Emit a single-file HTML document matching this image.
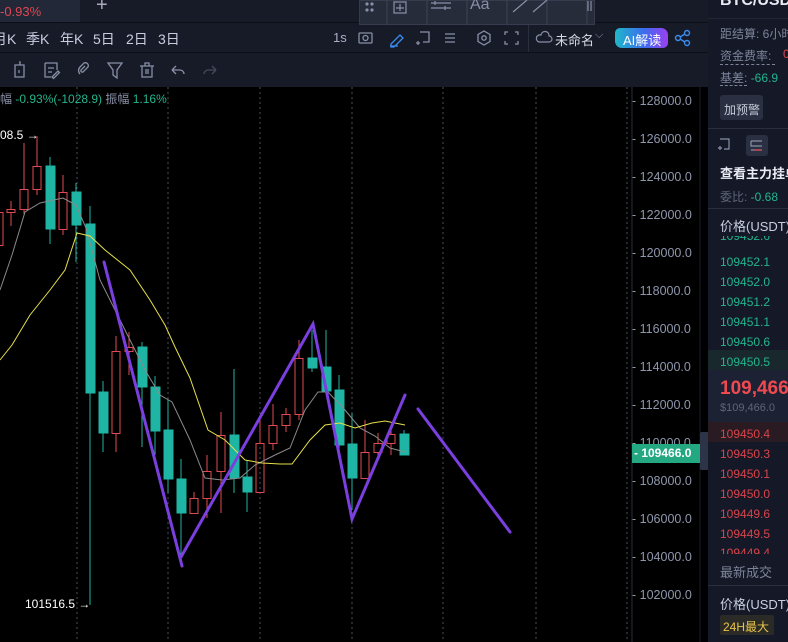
<!DOCTYPE html>
<html><head><meta charset="utf-8"><style>
*{margin:0;padding:0;box-sizing:border-box}
body{width:788px;height:642px;overflow:hidden;background:#000;font-family:"Liberation Sans","Noto Sans CJK SC",sans-serif;position:relative}
.abs{position:absolute}
.top{left:0;top:0;width:708px;height:87px;background:#171b28}
.t{position:absolute;white-space:nowrap}
.panel{left:708px;top:0;width:80px;height:642px;background:#151927}
.ax{color:#8f97ad;font-size:12.5px}
.tf{position:absolute;top:29px;color:#c8cde0;font-size:14px;white-space:nowrap}
</style></head><body>
<div class="abs top">
  <div class="abs" style="left:0;top:0;width:80px;height:22px;background:#222838"></div>
  <div class="t" style="left:0;top:4px;color:#e0474f;font-size:13px">-0.93%</div>
  <div class="t" style="left:96px;top:-6px;color:#aab;font-size:20px">+</div>
  <div class="abs" style="left:0;top:22px;width:708px;height:1px;background:#0c0e15"></div>
  <div class="tf" style="left:-7px">月K</div>
  <div class="tf" style="left:26px">季K</div>
  <div class="tf" style="left:60px">年K</div>
  <div class="tf" style="left:93px">5日</div>
  <div class="tf" style="left:126px">2日</div>
  <div class="tf" style="left:158px">3日</div>
  <div class="t" style="left:333px;top:30px;color:#a9b0c6;font-size:13px">1s</div>
  <svg class="abs" style="left:355px;top:28px" width="180" height="20" fill="none" stroke-width="1.3">
    <rect x="4" y="5" width="13" height="10" rx="1" stroke="#8890a6"/><circle cx="10.5" cy="10" r="2.5" stroke="#8890a6"/>
    <path d="M36 16l9-9 3 3-9 9h-3z M35 18h8" stroke="#3b8cf0"/>
    <path d="M65 4h9v10h-6 M63 13v4 M61 15h4" stroke="#8890a6"/>
    <path d="M90 6h10M90 10h10M90 14h10" stroke="#8890a6"/>
    <path d="M129 3l6 3.5v7l-6 3.5-6-3.5v-7z" stroke="#8890a6"/><circle cx="129" cy="10" r="2.2" stroke="#8890a6"/>
    <path d="M153 4h-3v3M160 4h3v3M153 16h-3v-3M160 16h3v-3" stroke="#8890a6"/>
  </svg>
  <div class="abs" style="left:528px;top:22px;width:1px;height:30px;background:#2a2f40"></div>
  <svg class="abs" style="left:535px;top:30px" width="18" height="14" fill="none"><path d="M4 12h10a3 3 0 0 0 0-6 4 4 0 0 0-8-1 3.5 3.5 0 0 0-2 7z" stroke="#8890a6" stroke-width="1.2"/></svg>
  <div class="t" style="left:555px;top:30px;color:#d5d9e6;font-size:13px">未命名</div>
  <div class="t" style="left:595px;top:29px;color:#8890a6;font-size:11px">⌵</div>
  <div class="abs" style="left:615px;top:28px;width:53px;height:20px;border-radius:5px 7px 5px 7px;background:linear-gradient(90deg,#1fb7c8,#3b6cf0 55%,#9b3ff0)"></div>
  <div class="t" style="left:623px;top:30px;color:#fff;font-size:13px">AI解读</div>
  <svg class="abs" style="left:674px;top:29px" width="18" height="18" fill="none" stroke="#3b8cf0" stroke-width="1.4"><circle cx="4" cy="9" r="2.5"/><circle cx="13" cy="4" r="2.5"/><circle cx="13" cy="14" r="2.5"/><path d="M6 8l5-3M6 10l5 3"/></svg>
  <div class="abs" style="left:0;top:52px;width:708px;height:1px;background:#0c0e15"></div>
  <svg class="abs" style="left:0;top:58px" width="220" height="24" fill="none" stroke="#8890a6" stroke-width="1.3">
    <path d="M15 7h9v12h-9z M19 4h1v3 M19 12v3"/>
    <path d="M45 5h12v7 M45 5v14h6 M48 10h6 M48 14h4 M52 19l6-6 1.5 1.5-6 6z"/>
    <path d="M80 16a5 5 0 0 1 0-7l4-4a3 3 0 0 1 4 4l-5 5a1.5 1.5 0 0 1-2-2l4-4"/>
    <path d="M108 5h14l-5 7v8l-4-3v-5z"/>
    <path d="M140 8h14 M145 8v-3h4v3 M142 8v11h10v-11 M146 11v5 M148 11v5"/>
    <path d="M172 12h8a4 4 0 0 1 4 4 M172 12l4-4 M172 12l4 4"/>
    <path d="M216 12h-8a4 4 0 0 0-4 4 M216 12l-4-4 M216 12l-4 4" stroke="#444a5c"/>
  </svg>
  <div class="abs" style="left:359px;top:0;width:236px;height:25px;background:#272c3b;border:1px solid #363c4e"></div>
  <svg class="abs" style="left:359px;top:0" width="236" height="25" fill="none" stroke="#8890a6" stroke-width="1.2">
    <path d="M28 0v25M68 0v25M108 0v25M148 0v25M188 0v25M228 0v25" stroke="#3a4052"/>
    <circle cx="8" cy="4" r="1" fill="#8890a6"/><circle cx="13" cy="4" r="1" fill="#8890a6"/><circle cx="8" cy="10" r="1" fill="#8890a6"/><circle cx="13" cy="10" r="1" fill="#8890a6"/>
    <path d="M35 2h12v11h-12z M41 4v7M37 8h8"/>
    <path d="M72 3h20M72 8h20M76 1v4M86 6v4"/>
    <path d="M154 12l14-12 M174 12l14-12"/>
    <path d="M229 1v10M232 1v10"/>
  </svg>
  <div class="t" style="left:470px;top:-4px;color:#8890a6;font-size:16px">Aa</div>
</div>

<svg class="abs" style="left:0;top:87px" width="708" height="555">
  <rect width="708" height="555" fill="#000"/>
  <g stroke="#4a4f5e" stroke-dasharray="2,3" stroke-width="1">
    <path d="M77 0v555M168 0v555M260 0v555M352 0v555M443 0v555M536 0v555M627 0v555"/>
  </g>
  <path d="M632 0v555" stroke="#2a2e3a"/>
  <path d="M700 0v555" stroke="#1a1d27"/>
</svg>
<div class="t" style="left:0;top:90px;color:#8890a6;font-size:12px">幅 <span style="color:#22b58e">-0.93%(-1028.9)</span> 振幅 <span style="color:#22b58e">1.16%</span></div>

<svg class="abs" style="left:0;top:0" width="708" height="642">
  <g stroke="#e04a50" fill="none" stroke-width="1">
    <path d="M-5 212.5h8v33h-8z"/>
    <path d="M11 201v8M11 212v14"/><rect x="7" y="209.5" width="8" height="3"/>
    <path d="M24 143v46M24 209v5"/><rect x="20" y="189.5" width="8" height="20"/>
    <path d="M37 136v30M37 189v6"/><rect x="33" y="166.5" width="8" height="23"/>
    <path d="M63 175v17M63 229v6"/><rect x="59" y="192.5" width="8" height="37"/>
    <path d="M116 336v15M116 433v19"/><rect x="112" y="351.5" width="8" height="82"/>
    <path d="M129 332v15M129 351v24"/><rect x="125" y="347.5" width="8" height="4"/>
    <path d="M194 492v6"/><rect x="190" y="498.5" width="8" height="15"/>
    <path d="M207 455v16M207 498v20"/><rect x="203" y="471.5" width="8" height="27"/>
    <path d="M221 412v23M221 471v42"/><rect x="217" y="435.5" width="8" height="36"/>
    <path d="M260 420v23"/><rect x="256" y="443.5" width="8" height="49"/>
    <path d="M273 404v21M273 443v7"/><rect x="269" y="425.5" width="8" height="18"/>
    <path d="M286 408v6M286 425v7"/><rect x="282" y="414.5" width="8" height="11"/>
    <path d="M299 340v18M299 414v6"/><rect x="295" y="358.5" width="8" height="56"/>
    <path d="M365 420v32"/><rect x="361" y="452.5" width="8" height="26"/>
    <path d="M378 433v10M378 452v3"/><rect x="374" y="443.5" width="8" height="9"/>
    <path d="M391 425v9M391 443v12"/><rect x="387" y="434.5" width="8" height="9"/>
  </g>
  <g stroke="#1fb5a5" fill="#1fb5a5" stroke-width="1">
    <path d="M50 157v72M50 229v15"/><rect x="46" y="166" width="9" height="63"/>
    <path d="M76 183v79"/><rect x="72" y="192" width="9" height="33"/>
    <path d="M90 206v399"/><rect x="86" y="224" width="9" height="169"/>
    <path d="M103 381v71"/><rect x="99" y="392" width="9" height="41"/>
    <path d="M142 342v105"/><rect x="138" y="347" width="9" height="40"/>
    <path d="M155 376v79"/><rect x="151" y="387" width="9" height="44"/>
    <path d="M168 400v93"/><rect x="164" y="430" width="9" height="49"/>
    <path d="M181 459v101"/><rect x="177" y="479" width="9" height="34"/>
    <path d="M234 369v124"/><rect x="230" y="435" width="9" height="43"/>
    <path d="M247 460v52"/><rect x="243" y="477" width="9" height="15"/>
    <path d="M312 330v42"/><rect x="308" y="358" width="9" height="10"/>
    <path d="M326 330v61"/><rect x="322" y="367" width="9" height="24"/>
    <path d="M339 375v75"/><rect x="335" y="390" width="9" height="55"/>
    <path d="M352 413v97"/><rect x="348" y="444" width="9" height="34"/>
    <path d="M404 430v25"/><rect x="400" y="434" width="9" height="21"/>
  </g>
  <path d="M0 290 L12 255 L25 212 L40 203 L63 198 L76 205 L86 228 L100 280 L120 320 L145 370 L160 395 L172 402 L190 440 L205 478 L222 480 L240 478 L255 465 L275 455 L290 448 L305 410 L318 392 L328 392 L345 410 L360 428 L375 436 L390 448 L405 452" fill="none" stroke="#8a8a8a" stroke-width="1"/>
  <path d="M0 360 L12 345 L30 315 L50 290 L65 270 L77 233 L90 236 L105 250 L130 270 L150 300 L165 325 L175 347 L190 378 L208 430 L225 440 L245 460 L262 463 L280 464 L292 464 L310 440 L325 425 L340 423 L355 428 L372 423 L385 421 L405 425" fill="none" stroke="#e6e04a" stroke-width="1"/>
  <g stroke="#7b3fe0" stroke-width="3" stroke-linecap="round" fill="none">
    <path d="M104 262 L182 566"/>
    <path d="M181 557 L313 324 L352 519 L405 395"/>
    <path d="M418 409 L510 532"/>
  </g>
</svg>
<div class="t" style="left:0;top:128px;color:#fff;font-size:12px">08.5 →</div>
<div class="t" style="left:25px;top:597px;color:#fff;font-size:12px">101516.5 →</div>

<div class="abs ax" style="left:632px;top:0;width:70px">
  <div class="t" style="top:94px">- 128000.0</div>
  <div class="t" style="top:132px">- 126000.0</div>
  <div class="t" style="top:170px">- 124000.0</div>
  <div class="t" style="top:208px">- 122000.0</div>
  <div class="t" style="top:246px">- 120000.0</div>
  <div class="t" style="top:284px">- 118000.0</div>
  <div class="t" style="top:322px">- 116000.0</div>
  <div class="t" style="top:360px">- 114000.0</div>
  <div class="t" style="top:398px">- 112000.0</div>
  <div class="t" style="top:436px">- 110000.0</div>
  <div class="t" style="top:474px">- 108000.0</div>
  <div class="t" style="top:512px">- 106000.0</div>
  <div class="t" style="top:550px">- 104000.0</div>
  <div class="t" style="top:588px">- 102000.0</div>
</div>
<div class="abs" style="left:632px;top:444px;width:68px;height:19px;background:#23a882"></div>
<div class="t" style="left:634px;top:446px;color:#fff;font-size:12px;font-weight:bold">- 109466.0</div>
<div class="abs" style="left:700px;top:432px;width:9px;height:38px;background:#2e3448;border-radius:2px"></div>

<div class="abs panel">
  <div class="t" style="left:12px;top:-8px;color:#e8ebf3;font-size:16px;font-weight:bold">BTC/USD</div>
  <div class="abs" style="left:0;top:18px;width:80px;height:1px;background:#222738"></div>
  <div class="t" style="left:12px;top:25px;color:#7d849a;font-size:12px">距结算: 6小时</div>
  <div class="t" style="left:12px;top:47px;color:#7d849a;font-size:12px;border-bottom:1px dashed #7d849a">资金费率:&nbsp;</div>
  <div class="t" style="left:75px;top:47px;color:#e0474f;font-size:12px">0</div>
  <div class="t" style="left:12px;top:69px;color:#7d849a;font-size:12px"><span style="border-bottom:1px dashed #7d849a">基差:</span> <span style="color:#22b58e">-66.9</span></div>
  <div class="abs" style="left:12px;top:95px;width:43px;height:25px;background:#2a3042;border-radius:3px"></div>
  <div class="t" style="left:16px;top:101px;color:#c5cad8;font-size:12px">加预警</div>
  <div class="abs" style="left:0;top:128px;width:80px;height:1px;background:#2a2f40"></div>
  <svg class="abs" style="left:8px;top:134px" width="70" height="22" fill="none" stroke-width="1.2">
    <path d="M4 5h9v10h-5M4 12v4M2 14h4" stroke="#8890a6"/>
    <rect x="30" y="1" width="22" height="21" rx="3" fill="#2a3042" stroke="none"/>
    <path d="M35 7h11M35 7v5h11M35 16h11" stroke="#8890a6"/><path d="M38 16h8" stroke="#e0474f"/>
  </svg>
  <div class="t" style="left:12px;top:163px;color:#e8ebf3;font-size:13px;font-weight:bold">查看主力挂单</div>
  <div class="t" style="left:12px;top:188px;color:#5f667a;font-size:12px">委比: <span style="color:#22b58e">-0.68</span></div>
  <div class="abs" style="left:0;top:208px;width:80px;height:1px;background:#2a2f40"></div>
  <div class="t" style="left:12px;top:216px;color:#c8cde0;font-size:13px">价格(USDT)</div>
  <div class="abs" style="left:0;top:350px;width:80px;height:20px;background:#18282c"></div>
  <div style="position:absolute;left:12px;top:236px;height:8px;width:70px;overflow:hidden"><div style="color:#22b58e;font-size:12px;margin-top:-7px">109452.6</div></div>
  <div class="t" style="left:12px;top:252px;color:#22b58e;font-size:12px;line-height:20px">109452.1<br>109452.0<br>109451.2<br>109451.1<br>109450.6<br>109450.5</div>
  <div class="abs" style="left:0;top:370px;width:80px;height:52px;background:#1c2233"></div>
  <div class="t" style="left:12px;top:378px;color:#ef4a50;font-size:19px;font-weight:bold">109,466</div>
  <div class="t" style="left:12px;top:402px;color:#5f667a;font-size:11px">$109,466.0</div>
  <div class="abs" style="left:0;top:422px;width:80px;height:20px;background:#2a1a22"></div>
  <div class="t" style="left:12px;top:424px;color:#d8444b;font-size:12px;line-height:20px">109450.4<br>109450.3<br>109450.1<br>109450.0<br>109449.6<br>109449.5</div>
  <div style="position:absolute;left:12px;top:546px;height:8px;width:70px;overflow:hidden"><div style="color:#d8444b;font-size:12px">109449.4</div></div>
  <div class="t" style="left:12px;top:562px;color:#7d849a;font-size:13px">最新成交</div>
  <div class="abs" style="left:0;top:585px;width:80px;height:1px;background:#2a2f40"></div>
  <div class="t" style="left:12px;top:594px;color:#c8cde0;font-size:13px">价格(USDT)</div>
  <div class="abs" style="left:12px;top:615px;width:54px;height:20px;background:#2a2a26;border-radius:2px"></div>
  <div class="t" style="left:15px;top:618px;color:#e8c44a;font-size:12px">24H最大</div>
</div>
</body></html>
